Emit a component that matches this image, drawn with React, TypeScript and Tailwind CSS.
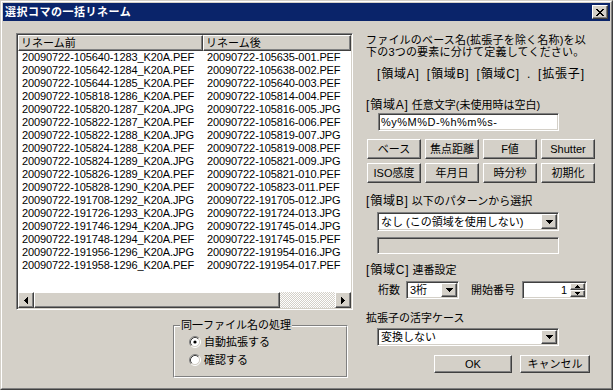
import React from 'react';

const rows: [string, string][] = [
  ['20090722-105640-1283_K20A.PEF', '20090722-105635-001.PEF'],
  ['20090722-105642-1284_K20A.PEF', '20090722-105638-002.PEF'],
  ['20090722-105644-1285_K20A.PEF', '20090722-105640-003.PEF'],
  ['20090722-105818-1286_K20A.PEF', '20090722-105814-004.PEF'],
  ['20090722-105820-1287_K20A.JPG', '20090722-105816-005.JPG'],
  ['20090722-105822-1287_K20A.PEF', '20090722-105816-006.PEF'],
  ['20090722-105822-1288_K20A.JPG', '20090722-105819-007.JPG'],
  ['20090722-105824-1288_K20A.PEF', '20090722-105819-008.PEF'],
  ['20090722-105824-1289_K20A.JPG', '20090722-105821-009.JPG'],
  ['20090722-105826-1289_K20A.PEF', '20090722-105821-010.PEF'],
  ['20090722-105828-1290_K20A.PEF', '20090722-105823-011.PEF'],
  ['20090722-191708-1292_K20A.JPG', '20090722-191705-012.JPG'],
  ['20090722-191726-1293_K20A.JPG', '20090722-191724-013.JPG'],
  ['20090722-191746-1294_K20A.JPG', '20090722-191745-014.JPG'],
  ['20090722-191748-1294_K20A.PEF', '20090722-191745-015.PEF'],
  ['20090722-191956-1296_K20A.JPG', '20090722-191954-016.JPG'],
  ['20090722-191958-1296_K20A.PEF', '20090722-191954-017.PEF'],
];

// win2000 style bevels
const raised =
  'border border-t-white border-l-white border-r-[#404040] border-b-[#404040] shadow-[inset_-1px_-1px_0_#808080] bg-[#d4d0c8]';
const sunken =
  'border border-t-[#808080] border-l-[#808080] border-r-white border-b-white shadow-[inset_1px_1px_0_#404040,inset_-1px_-1px_0_#d4d0c8]';

const DownArrow = () => (
  <svg width="7" height="4" viewBox="0 0 7 4" shapeRendering="crispEdges">
    <path d="M0 0h7v1H0zM1 1h5v1H1zM2 2h3v1H2zM3 3h1v1H3z" fill="#000" />
  </svg>
);

const SmallUp = () => (
  <svg width="5" height="3" viewBox="0 0 5 3" shapeRendering="crispEdges">
    <path d="M2 0h1v1H2zM1 1h3v1H1zM0 2h5v1H0z" fill="#000" />
  </svg>
);

const SmallDown = () => (
  <svg width="5" height="3" viewBox="0 0 5 3" shapeRendering="crispEdges">
    <path d="M0 0h5v1H0zM1 1h3v1H1zM2 2h1v1H2z" fill="#000" />
  </svg>
);

const LeftArrow = () => (
  <svg width="4" height="7" viewBox="0 0 4 7" shapeRendering="crispEdges">
    <path d="M3 0h1v7H3zM2 1h1v5H2zM1 2h1v3H1zM0 3h1v1H0z" fill="#000" />
  </svg>
);

const RightArrow = () => (
  <svg width="4" height="7" viewBox="0 0 4 7" shapeRendering="crispEdges">
    <path d="M0 0h1v7H0zM1 1h1v5H1zM2 2h1v3H2zM3 3h1v1H3z" fill="#000" />
  </svg>
);

const Radio = ({ checked }: { checked?: boolean }) => (
  <svg width="12" height="12" viewBox="0 0 12 12">
    <circle cx="6" cy="6" r="4.5" fill="#fff" />
    <path d="M2.11 9.89A5.5 5.5 0 0 1 9.89 2.11" stroke="#808080" fill="none" />
    <path d="M9.89 2.11A5.5 5.5 0 0 1 2.11 9.89" stroke="#fff" fill="none" />
    <path d="M2.82 9.18A4.5 4.5 0 0 1 9.18 2.82" stroke="#404040" fill="none" />
    <path d="M9.18 2.82A4.5 4.5 0 0 1 2.82 9.18" stroke="#d4d0c8" fill="none" />
    {checked && <circle cx="6" cy="6" r="1.6" fill="#000" />}
  </svg>
);

// "[領域A]" style tags render wider in the original font
const Tag = ({ children }: { children: React.ReactNode }) => (
  <span className="text-[12px] tracking-[0.8px]">{children}</span>
);

const Combo = ({ value, className }: { value: string; className: string }) => (
  <div className={`${sunken} bg-white p-px flex ${className}`}>
    <span className="flex-1 pl-[2px] flex items-center whitespace-nowrap overflow-hidden">{value}</span>
    <span className={`${raised} w-4 flex items-center justify-center`}>
      <DownArrow />
    </span>
  </div>
);

const Btn = ({ children, className = '' }: { children: React.ReactNode; className?: string }) => (
  <button type="button" className={`${raised} flex items-center justify-center whitespace-nowrap ${className}`}>
    {children}
  </button>
);

const App: React.FC = () => {
  return (
    <div className="w-[613px] h-[390px] bg-[#d4d0c8] border border-t-[#d4d0c8] border-l-[#d4d0c8] border-r-[#404040] border-b-[#404040] text-black text-[11px] leading-[13px] font-[family-name:'Liberation_Sans','Noto_Sans_CJK_JP',sans-serif]">
      <div className="h-full border border-t-white border-l-white border-r-[#808080] border-b-[#808080] p-px flex flex-col">

        {/* TITLE BAR */}
        <div className="h-[18px] bg-[#0a246a] flex items-center pl-[2px] pr-[2px]">
          <span className="flex-1 text-white font-bold text-[11px] tracking-[0.5px]">選択コマの一括リネーム</span>
          <span className={`${raised} w-4 h-[14px] flex items-center justify-center`}>
            <svg width="8" height="7" viewBox="0 0 8 7" shapeRendering="crispEdges">
              <path d="M0 0h2l2 2.3L6 0h2L5 3.5 8 7H6L4 4.7 2 7H0l3-3.5z" fill="#000" />
            </svg>
          </span>
        </div>

        {/* CLIENT */}
        <div className="flex flex-1">

          {/* LEFT: list + duplicate handling */}
          <div className="ml-[13px] mt-[12px] w-[337px] flex flex-col">
            <div className={`${sunken} bg-white p-px h-[277px] flex flex-col`}>
              <div className="flex h-[16px]">
                <div className={`${raised} w-[185px] pl-[2px] flex items-center`}>リネーム前</div>
                <div className={`${raised} flex-1 pl-[2px] flex items-center`}>リネーム後</div>
              </div>
              <div className="flex-1 tracking-[-0.1px]">
                {rows.map(([before, after]) => (
                  <div key={before} className="flex h-[13px] leading-[13px] whitespace-nowrap">
                    <span className="w-[185px] pl-[4px]">{before}</span>
                    <span className="pl-[4px]">{after}</span>
                  </div>
                ))}
              </div>
              <div className="flex h-[16px]">
                <span className={`${raised} w-4 flex items-center justify-center`}>
                  <LeftArrow />
                </span>
                <span className={`${raised} w-[246px]`} />
                <span className="flex-1 bg-[image:repeating-conic-gradient(#d4d0c8_0%_25%,#ffffff_0%_50%)] bg-[length:2px_2px]" />
                <span className={`${raised} w-4 flex items-center justify-center`}>
                  <RightArrow />
                </span>
              </div>
            </div>

            <div className="relative mt-[15px] ml-[157px] w-[175px] h-[53px] border border-t-[#808080] border-l-[#808080] border-r-white border-b-white">
              <div className="h-full border border-t-white border-l-white border-r-[#808080] border-b-[#808080] pt-[6px] pl-[14px]">
                <div className="flex items-center h-[18px] gap-[3px]">
                  <Radio checked />
                  <span>自動拡張する</span>
                </div>
                <div className="flex items-center h-[18px] gap-[3px]">
                  <Radio />
                  <span>確認する</span>
                </div>
              </div>
              <span className="absolute left-[6px] top-[-8px] px-px leading-[14px] bg-[#d4d0c8]">同一ファイル名の処理</span>
            </div>
          </div>

          {/* RIGHT: naming rules */}
          <div className="ml-[13px] flex flex-col leading-[12px] whitespace-nowrap">
            <p className="mt-[13px] tracking-[0.2px]">
              ファイルのベース名(拡張子を除く名称)を以
              <br />
              下の3つの要素に分けて定義してください。
            </p>
            <p className="mt-[10px] pl-[11px] [word-spacing:4px]">
              <Tag>[領域A]</Tag> <Tag>[領域B]</Tag> <Tag>[領域C]</Tag> <Tag>.</Tag> <Tag>[拡張子]</Tag>
            </p>

            <p className="mt-[19px]">
              <Tag>[領域A]</Tag> 任意文字(未使用時は空白)
            </p>
            <div className={`${sunken} bg-white mt-[2px] ml-[12px] w-[181px] h-[18px] pl-[2px] flex items-center tracking-[0.5px]`}>
              %y%M%D-%h%m%s-
            </div>
            <div className="mt-[8px] ml-[1px] grid grid-cols-[repeat(4,54px)] gap-[4px]">
              {['ベース', '焦点距離', 'F値', 'Shutter', 'ISO感度', '年月日', '時分秒', '初期化'].map((t) => (
                <Btn key={t} className="h-[20px]">
                  {t}
                </Btn>
              ))}
            </div>

            <p className="mt-[12px]">
              <Tag>[領域B]</Tag> 以下のパターンから選択
            </p>
            <Combo value="なし (この領域を使用しない)" className="mt-[5px] ml-[11px] w-[182px] h-[19px]" />
            <div className={`${sunken} mt-[6px] ml-[11px] w-[182px] h-[17px]`} />

            <p className="mt-[10px]">
              <Tag>[領域C]</Tag> 連番設定
            </p>
            <div className="mt-[5px] flex items-center h-[18px]">
              <span className="ml-[12px]">桁数</span>
              <Combo value="3桁" className="ml-[6px] w-[53px] h-[18px]" />
              <span className="ml-[12px]">開始番号</span>
              <div className={`${sunken} bg-white p-px flex ml-[7px] w-[65px] h-[18px]`}>
                <span className="flex-1 pr-[3px] flex items-center justify-end">1</span>
                <div className="flex flex-col w-[15px]">
                  <span className={`${raised} flex-1 flex items-center justify-center`}>
                    <SmallUp />
                  </span>
                  <span className={`${raised} flex-1 flex items-center justify-center`}>
                    <SmallDown />
                  </span>
                </div>
              </div>
            </div>

            <p className="mt-[13px]">拡張子の活字ケース</p>
            <Combo value="変換しない" className="mt-[4px] ml-[11px] w-[182px] h-[18px]" />

            <div className="mt-[9px] flex">
              <Btn className="ml-[68px] w-[78px] h-[18px]">OK</Btn>
              <Btn className="ml-[8px] w-[70px] h-[18px]">キャンセル</Btn>
            </div>
          </div>
        </div>
      </div>
    </div>
  );
};

export default App;
